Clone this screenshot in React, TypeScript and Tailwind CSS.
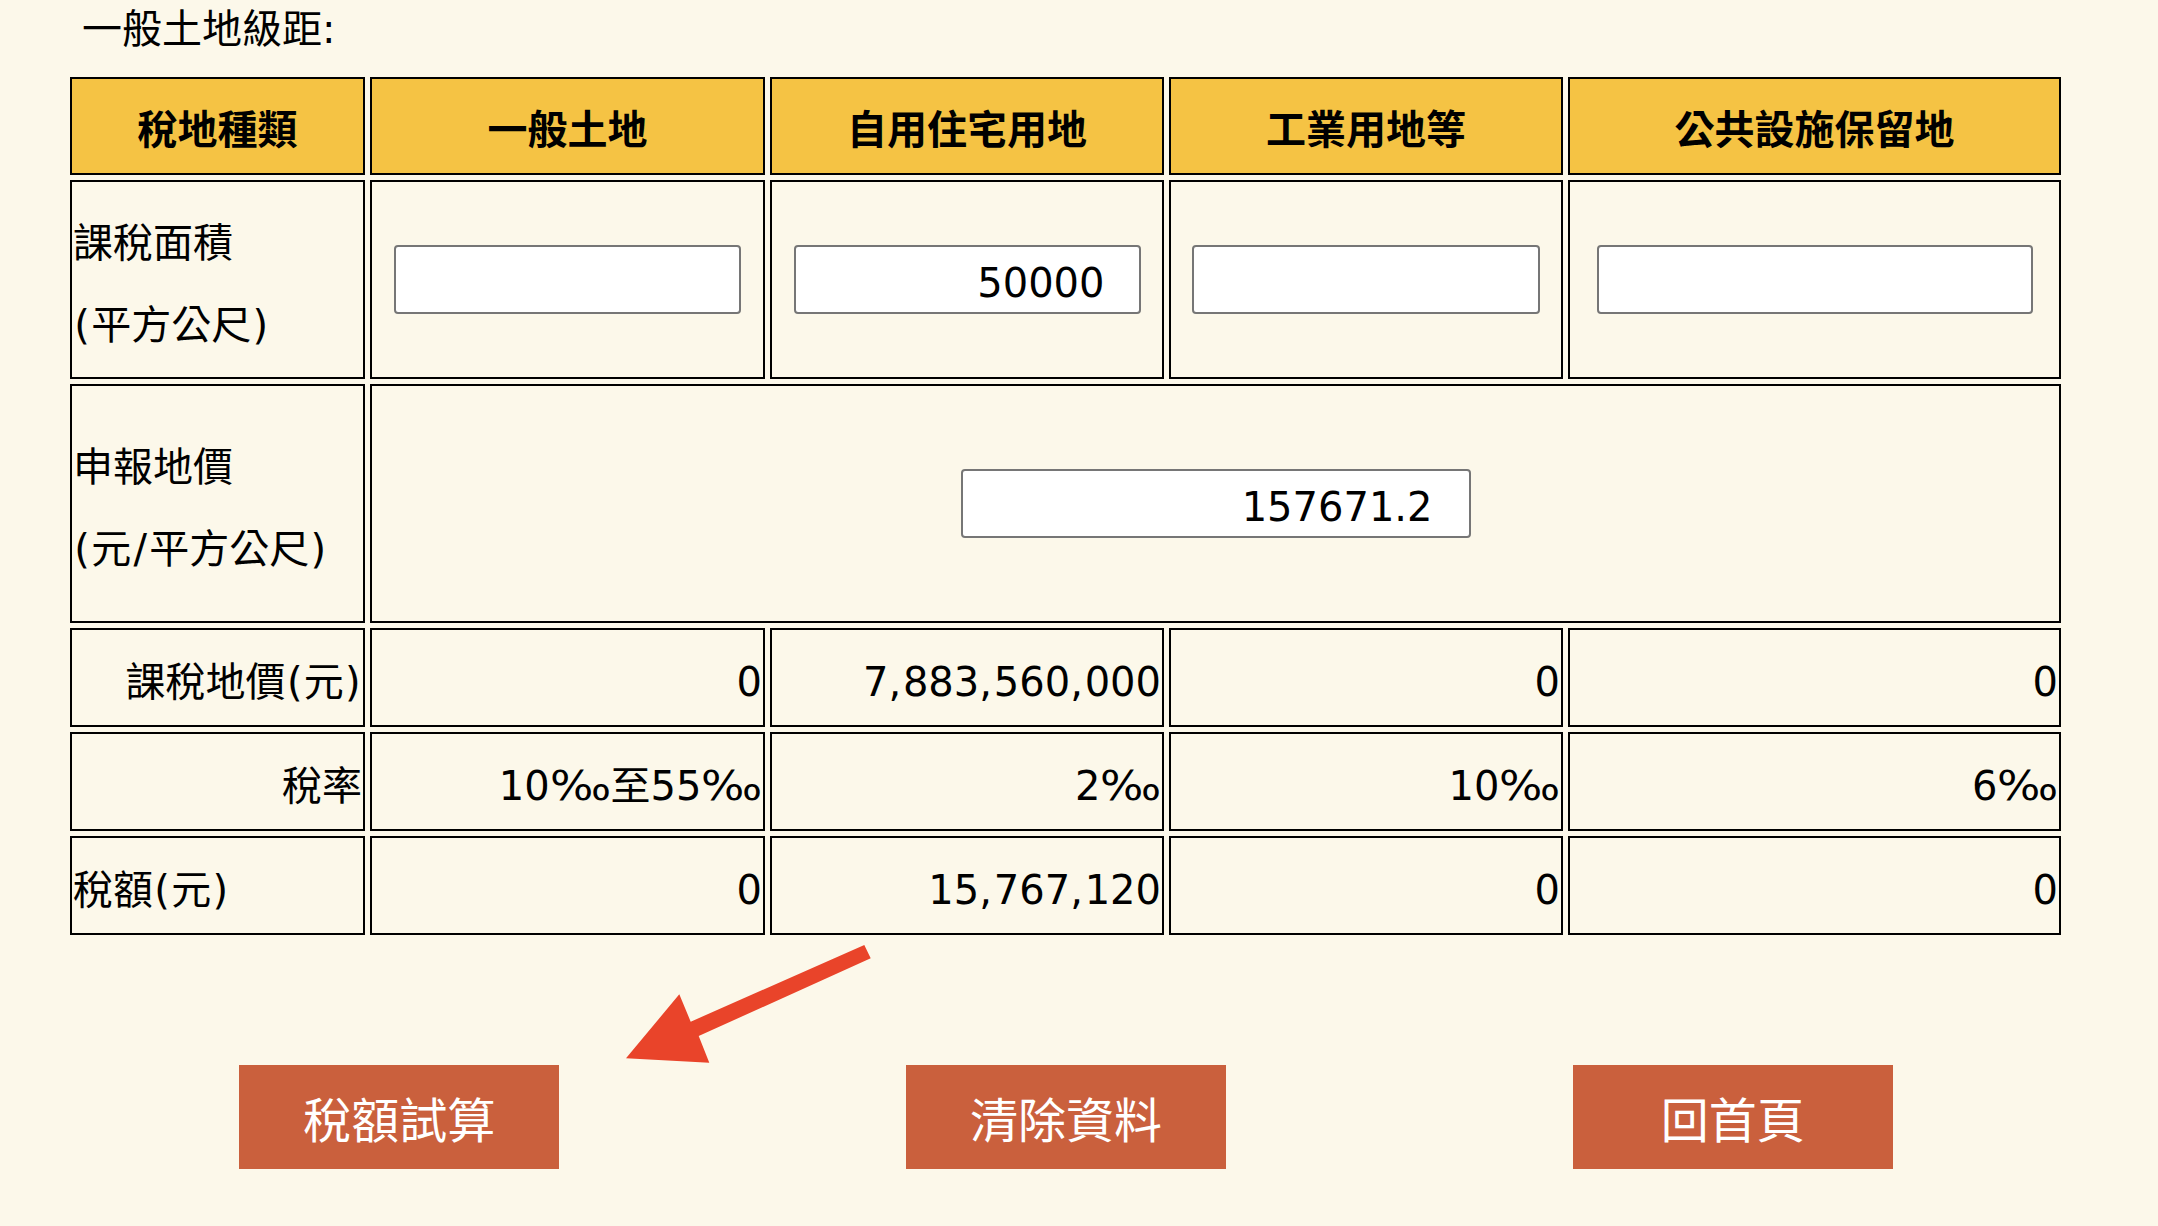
import React from 'react';

const cellBase = 'border-2 border-black flex items-center pt-[8px]';

// 原頁面用 Verdana,標點較 DejaVu 寬,這裡補上間距
const punct: Record<string, string> = {
  ',': 'mr-[1.8px]',
  '.': 'mr-[1.8px]',
  '(': 'mx-[1.3px]',
  ')': 'mx-[1.3px]',
  '/': 'mx-[2.3px]',
  '‰': 'inline-block scale-x-[1.14] origin-left mr-[7px]',
};

function T({ text }: { text: string }) {
  return (
    <>
      {Array.from(text).map((ch, i) =>
        punct[ch] ? (
          <span key={i} className={punct[ch]}>
            {ch}
          </span>
        ) : (
          <React.Fragment key={i}>{ch}</React.Fragment>
        )
      )}
    </>
  );
}

function NumInput({ value, width }: { value: string; width: string }) {
  return (
    <input
      type="text"
      defaultValue={value}
      className={`${width} h-[69px] bg-white border-2 border-[#767676] rounded-[4px] text-right pr-[34px] pt-[6px] text-black outline-none`}
    />
  );
}

export default function App() {
  const taxable = ['0', '7,883,560,000', '0', '0'];
  const rates = ['10‰至55‰', '2‰', '10‰', '6‰'];
  const amounts = ['0', '15,767,120', '0', '0'];

  return (
    <div className="relative min-h-screen w-full bg-[#fcf8ea] text-black text-[40px] font-['DejaVu_Sans','Noto_Sans_CJK_TC',sans-serif]">
      {/* 標題 */}
      <div className="pl-[82px] leading-[58px] h-[58px]">一般土地級距:</div>

      {/* 試算表 */}
      <div className="mt-[19px] ml-[70px] grid grid-cols-[295px_395px_394px_394px_493px] grid-rows-[98px_199px_239px_99px_99px_99px] gap-[5px] w-max">
        {['稅地種類', '一般土地', '自用住宅用地', '工業用地等', '公共設施保留地'].map((h) => (
          <div key={h} className={`${cellBase} justify-center bg-[#f5c344] font-bold`}>
            {h}
          </div>
        ))}

        {/* 課稅面積 */}
        <div className={`${cellBase} pl-px pt-[9px]`}>
          <div className="leading-[82px]">
            課稅面積
            <br />
            <T text="(平方公尺)" />
          </div>
        </div>
        <div className="border-2 border-black flex items-center justify-center">
          <NumInput value="" width="w-[347px]" />
        </div>
        <div className="border-2 border-black flex items-center justify-center">
          <NumInput value="50000" width="w-[347px]" />
        </div>
        <div className="border-2 border-black flex items-center justify-center">
          <NumInput value="" width="w-[348px]" />
        </div>
        <div className="border-2 border-black flex items-center justify-center">
          <NumInput value="" width="w-[436px]" />
        </div>

        {/* 申報地價 */}
        <div className={`${cellBase} pl-px pt-[9px]`}>
          <div className="leading-[82px]">
            申報地價
            <br />
            <T text="(元/平方公尺)" />
          </div>
        </div>
        <div className="col-span-4 border-2 border-black flex items-center justify-center">
          <NumInput value="157671.2" width="w-[510px] pr-[36px]" />
        </div>

        {/* 課稅地價 */}
        <div className={`${cellBase} justify-end pr-px`}>
          <T text="課稅地價(元)" />
        </div>
        {taxable.map((v, i) => (
          <div key={`t${i}`} className={`${cellBase} justify-end pr-px`}>
            <T text={v} />
          </div>
        ))}

        {/* 稅率 */}
        <div className={`${cellBase} justify-end pr-px`}>稅率</div>
        {rates.map((v, i) => (
          <div key={`r${i}`} className={`${cellBase} justify-end pr-px`}>
            <span>
              <T text={v} />
            </span>
          </div>
        ))}

        {/* 稅額 */}
        <div className={`${cellBase} pl-px`}>
          <T text="稅額(元)" />
        </div>
        {amounts.map((v, i) => (
          <div key={`a${i}`} className={`${cellBase} justify-end pr-px`}>
            <T text={v} />
          </div>
        ))}
      </div>

      {/* 按鈕 */}
      <div className="mt-[130px] ml-[66px] w-[2000px] grid grid-cols-3 justify-items-center">
        {['稅額試算', '清除資料', '回首頁'].map((b) => (
          <button
            key={b}
            className="w-[320px] h-[104px] bg-[#ca603d] text-white text-[48px] pt-[7px] flex items-center justify-center"
          >
            {b}
          </button>
        ))}
      </div>

      {/* 紅色箭頭標註 */}
      <svg
        className="absolute left-0 top-0 w-[2158px] h-[1226px] pointer-events-none"
        viewBox="0 0 2158 1226"
      >
        <polygon
          points="864.3,945 690.7,1021.7 679.3,994.3 626,1058.3 709.3,1062.7 698.7,1036 870.7,958.3"
          fill="#e9442a"
        />
      </svg>
    </div>
  );
}
